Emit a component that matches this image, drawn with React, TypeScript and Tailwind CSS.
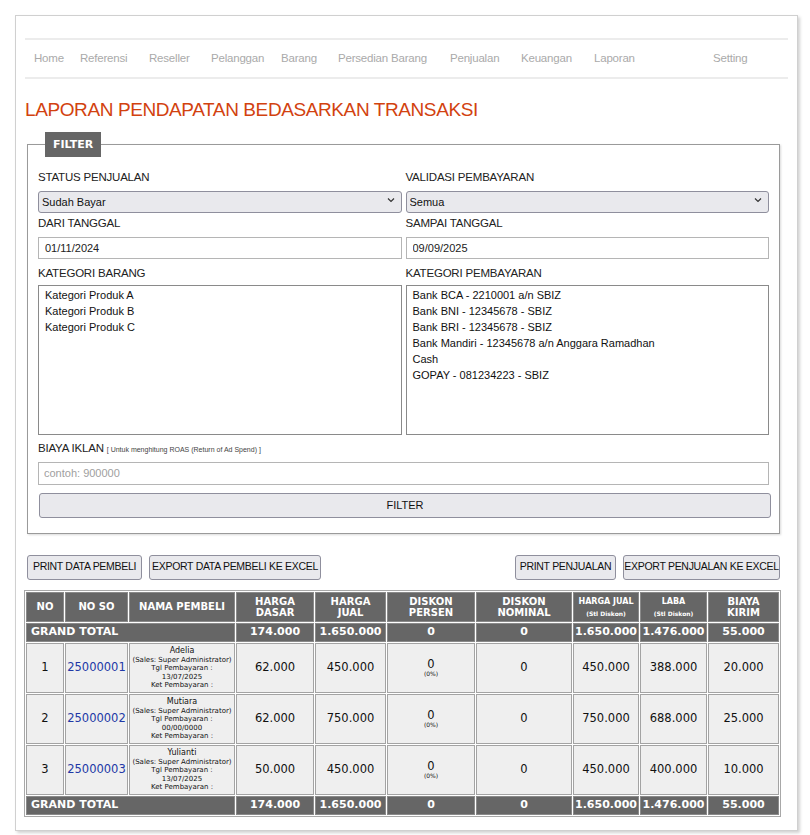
import { useState } from "react";

const navItems = [
  { label: "Home", w: "w-[46px]" },
  { label: "Referensi", w: "w-[69px]" },
  { label: "Reseller", w: "w-[62px]" },
  { label: "Pelanggan", w: "w-[70px]" },
  { label: "Barang", w: "w-[57px]" },
  { label: "Persedian Barang", w: "w-[112px]" },
  { label: "Penjualan", w: "w-[71px]" },
  { label: "Keuangan", w: "w-[73px]" },
  { label: "Laporan", w: "w-[119px]" },
  { label: "Setting", w: "w-[60px]" },
];

const kategoriBarang = ["Kategori Produk A", "Kategori Produk B", "Kategori Produk C"];

const kategoriPembayaran = [
  "Bank BCA - 2210001 a/n SBIZ",
  "Bank BNI - 12345678 - SBIZ",
  "Bank BRI - 12345678 - SBIZ",
  "Bank Mandiri - 12345678 a/n Anggara Ramadhan",
  "Cash",
  "GOPAY - 081234223 - SBIZ",
];

const rows = [
  { no: 1, so: "25000001", nama: "Adelia", tgl: "13/07/2025", dasar: "62.000", jual: "450.000", jualStl: "450.000", laba: "388.000", kirim: "20.000" },
  { no: 2, so: "25000002", nama: "Mutiara", tgl: "00/00/0000", dasar: "62.000", jual: "750.000", jualStl: "750.000", laba: "688.000", kirim: "25.000" },
  { no: 3, so: "25000003", nama: "Yulianti", tgl: "13/07/2025", dasar: "50.000", jual: "450.000", jualStl: "450.000", laba: "400.000", kirim: "10.000" },
];

const Chevron = () => (
  <svg
    className="pointer-events-none absolute right-[7px] top-1/2 -translate-y-1/2"
    width="8"
    height="5"
    viewBox="0 0 8 5"
    fill="none"
  >
    <path d="M1 1l3 3 3-3" stroke="#333" strokeWidth="1.2" />
  </svg>
);

const Select = ({ value }: { value: string }) => (
  <div className="relative h-[22px]">
    <select
      defaultValue={value}
      className="h-full w-full appearance-none rounded-[3px] border border-[#8f8f9d] bg-[#e9e9ed] pl-[3px] text-[11px] text-[#111] outline-none"
    >
      <option>{value}</option>
    </select>
    <Chevron />
  </div>
);

const Label = ({ children, className = "" }: { children: React.ReactNode; className?: string }) => (
  <div className={`h-[24px] text-[11.5px] leading-[24px] tracking-[-0.2px] text-[#222] ${className}`}>{children}</div>
);

const TextBox = ({ value }: { value: string }) => (
  <input
    type="text"
    readOnly
    value={value}
    className="h-[22px] w-full border border-[#b5b5b5] bg-white px-[6px] text-[11px] text-[#222] outline-none"
  />
);

const ListBox = ({ items }: { items: string[] }) => (
  <div className="h-[150px] border border-[#8a8a8a] bg-white px-[6px] pt-[1px] text-[11px] leading-[16px] text-[#111]">
    {items.map((it) => (
      <div key={it}>{it}</div>
    ))}
  </div>
);

const Button = ({ children, className = "" }: { children: React.ReactNode; className?: string }) => (
  <button
    className={`h-[25px] whitespace-nowrap rounded-[3px] border border-[#8f8f9d] bg-[#e9e9ed] px-0 text-[10.5px] tracking-[-0.3px] text-[#111] ${className}`}
  >
    {children}
  </button>
);

const th = "border border-[#8a8a8a] bg-[#666666] text-white font-bold text-[10px] leading-[11px] text-center align-middle";
const gt = "border border-[#8a8a8a] bg-[#666666] text-white font-bold text-[11px] h-[19px] text-center whitespace-nowrap";
const tdBase = "border border-[#a3a3a3] bg-[#efefef] text-[#111] text-center align-middle";
const td = `${tdBase} text-[11.5px]`;

export default function App() {
  const [biaya, setBiaya] = useState("");

  return (
    <div className="min-h-[835px] bg-white pl-[15px] pt-[15px] pr-[12px]" style={{ fontFamily: '"Liberation Sans", Arial, sans-serif' }}>
      <div className="h-[816px] border border-[#d0d0d0] bg-white px-[8px] shadow-[2px_2px_3px_rgba(0,0,0,0.18)]">
        {/* nav */}
        <div className="mt-[22px] mx-[1px] flex h-[41px] items-center border-y-2 border-[#ececec] pl-[9px] text-[11.5px] tracking-[-0.2px] text-[#aaaaaa]">
          {navItems.map((n) => (
            <span key={n.label} className={`shrink-0 ${n.w}`}>
              {n.label}
            </span>
          ))}
        </div>

        <h1 className="mt-[19px] pl-[1px] text-[19px] leading-[24px] tracking-[-0.4px] text-[#d2420f]">
          LAPORAN PENDAPATAN BEDASARKAN TRANSAKSI
        </h1>

        {/* filter */}
        <fieldset className="mt-[10px] ml-[3px] mr-[9px] border border-[#9a9a9a] px-[10px] pb-[15px] shadow-[1px_1px_2px_rgba(0,0,0,0.15)]">
          <legend
            className="ml-[7px] h-[25px] bg-[#666666] px-[8px] text-[11px] font-bold leading-[25px] text-white"
            style={{ fontFamily: '"DejaVu Sans", Verdana, sans-serif' }}
          >
            FILTER
          </legend>
          <div className="grid grid-cols-2 gap-x-[4px] pt-[8px]">
            <div>
              <Label>STATUS PENJUALAN</Label>
              <Select value="Sudah Bayar" />
              <Label>DARI TANGGAL</Label>
              <TextBox value="01/11/2024" />
              <Label className="mt-[2px]">KATEGORI BARANG</Label>
              <ListBox items={kategoriBarang} />
            </div>
            <div>
              <Label>VALIDASI PEMBAYARAN</Label>
              <Select value="Semua" />
              <Label>SAMPAI TANGGAL</Label>
              <TextBox value="09/09/2025" />
              <Label className="mt-[2px]">KATEGORI PEMBAYARAN</Label>
              <ListBox items={kategoriPembayaran} />
            </div>
          </div>
          <div className="mt-[2px] h-[23px] text-[11.5px] leading-[23px] tracking-[-0.2px] text-[#222]">
            BIAYA IKLAN <span className="text-[7px] tracking-normal text-[#444]">[ Untuk menghitung ROAS (Return of Ad Spend) ]</span>
          </div>
          <input
            type="text"
            value={biaya}
            onChange={(e) => setBiaya(e.target.value)}
            placeholder="contoh: 900000"
            className="h-[23px] w-full border border-[#b5b5b5] bg-white px-[5px] text-[11px] text-[#222] outline-none placeholder:text-[#a0a0a0]"
          />
          <button className="mt-[8px] ml-[1px] h-[25px] w-[calc(100%+1px)] rounded-[3px] border border-[#8f8f9d] bg-[#e9e9ed] text-[11px] text-[#111]">
            FILTER
          </button>
        </fieldset>

        {/* action buttons */}
        <div className="mt-[21px] ml-[3px] mr-[9px] flex">
          <Button className="w-[115px]">PRINT DATA PEMBELI</Button>
          <Button className="ml-[7px] w-[172px]">EXPORT DATA PEMBELI KE EXCEL</Button>
          <Button className="ml-auto w-[101px]">PRINT PENJUALAN</Button>
          <Button className="ml-[7px] w-[157px]">EXPORT PENJUALAN KE EXCEL</Button>
        </div>

        {/* table */}
        <table
          className="mt-[10px] w-[757px] table-fixed border-separate border-spacing-[1px] border border-[#a8a8a8]"
          style={{ fontFamily: '"DejaVu Sans", Verdana, sans-serif' }}
        >
          <colgroup>
            <col className="w-[38px]" />
            <col className="w-[63px]" />
            <col className="w-[106px]" />
            <col className="w-[78px]" />
            <col className="w-[71px]" />
            <col className="w-[88px]" />
            <col className="w-[96px]" />
            <col className="w-[66px]" />
            <col className="w-[67px]" />
            <col className="w-[71px]" />
          </colgroup>
          <thead>
            <tr className="h-[30px]">
              <th className={th}>NO</th>
              <th className={th}>NO SO</th>
              <th className={th}>NAMA PEMBELI</th>
              <th className={th}>HARGA<br />DASAR</th>
              <th className={th}>HARGA<br />JUAL</th>
              <th className={th}>DISKON<br />PERSEN</th>
              <th className={th}>DISKON<br />NOMINAL</th>
              <th className={th}>
                <span className="text-[8px]">HARGA JUAL</span>
                <br />
                <span className="text-[6px] leading-[8px]">(Stl Diskon)</span>
              </th>
              <th className={th}>
                <span className="text-[8px]">LABA</span>
                <br />
                <span className="text-[6px] leading-[8px]">(Stl Diskon)</span>
              </th>
              <th className={th}>BIAYA<br />KIRIM</th>
            </tr>
          </thead>
          <tbody>
            <tr>
              <td colSpan={3} className={`${gt} pl-[4px] text-left`}>GRAND TOTAL</td>
              <td className={gt}>174.000</td>
              <td className={gt}>1.650.000</td>
              <td className={gt}>0</td>
              <td className={gt}>0</td>
              <td className={gt}>1.650.000</td>
              <td className={gt}>1.476.000</td>
              <td className={gt}>55.000</td>
            </tr>
            {rows.map((r) => (
              <tr key={r.no} className="h-[50px]">
                <td className={td}>{r.no}</td>
                <td className={`${td} text-[#2138a6]`}>{r.so}</td>
                <td className={`${tdBase} whitespace-nowrap text-[7px] leading-[8.5px]`}>
                  <div className="text-[8px] leading-[10px]">{r.nama}</div>
                  <div>(Sales: Super Administrator)</div>
                  <div>Tgl Pembayaran :</div>
                  <div>{r.tgl}</div>
                  <div>Ket Pembayaran :</div>
                </td>
                <td className={td}>{r.dasar}</td>
                <td className={td}>{r.jual}</td>
                <td className={`${tdBase} text-[11.5px] leading-[12px]`}>
                  <div>0</div>
                  <div className="text-[6px] leading-[8px]">(0%)</div>
                </td>
                <td className={td}>0</td>
                <td className={td}>{r.jualStl}</td>
                <td className={td}>{r.laba}</td>
                <td className={td}>{r.kirim}</td>
              </tr>
            ))}
            <tr>
              <td colSpan={3} className={`${gt} pl-[4px] text-left`}>GRAND TOTAL</td>
              <td className={gt}>174.000</td>
              <td className={gt}>1.650.000</td>
              <td className={gt}>0</td>
              <td className={gt}>0</td>
              <td className={gt}>1.650.000</td>
              <td className={gt}>1.476.000</td>
              <td className={gt}>55.000</td>
            </tr>
          </tbody>
        </table>
      </div>
    </div>
  );
}
